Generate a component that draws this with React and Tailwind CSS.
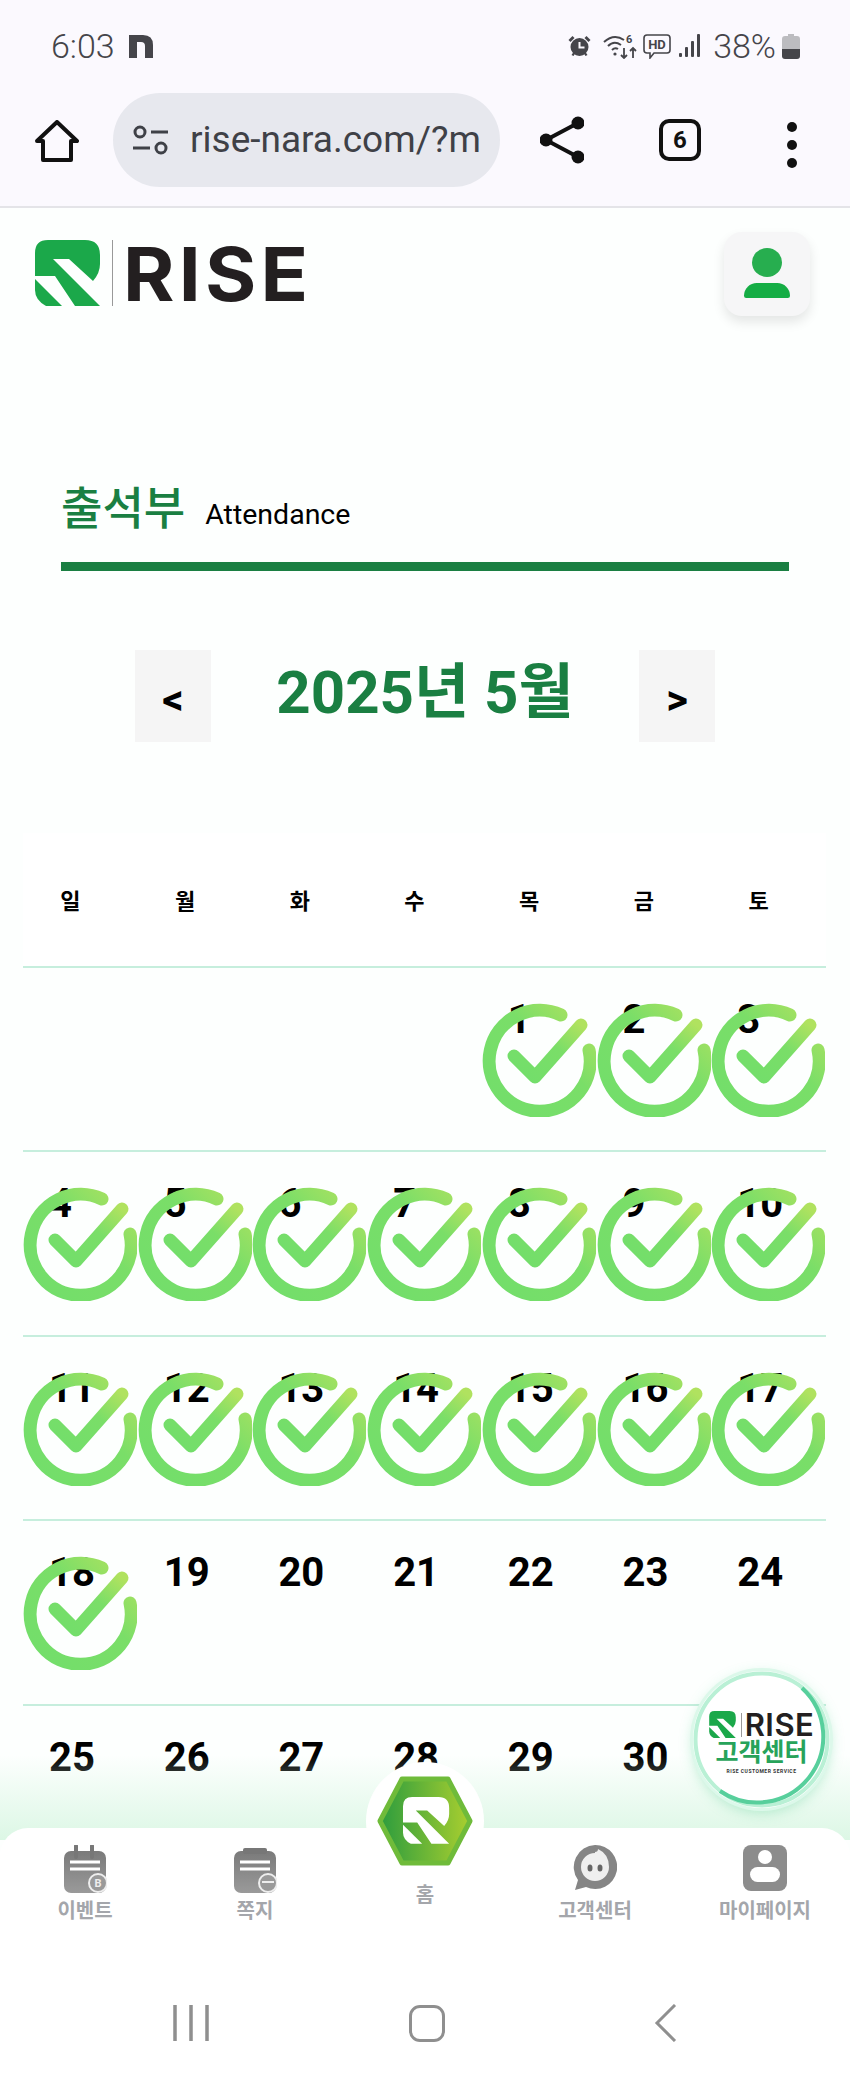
import React from 'react';

const WEEKDAYS = ['일', '월', '화', '수', '목', '금', '토'];
const WEEKS = [
    [null, null, null, null, 1, 2, 3],
    [4, 5, 6, 7, 8, 9, 10],
    [11, 12, 13, 14, 15, 16, 17],
    [18, 19, 20, 21, 22, 23, 24],
    [25, 26, 27, 28, 29, 30, 31],
];
const LAST_CHECKED = 18;
const MARK_TOP = 'M13 0H50Q65 0 65 15V24Q65 33 58 41L34 19H18L65 66H40L20 36H0V13Q0 0 13 0Z';
const MARK_BOTTOM = 'M0 39L27 66H11Q0 60 0 50Z';

const RiseMark = ({ className }) => (
    <svg viewBox="0 0 65 66" className={className}>
        <path fill="#1ba84a" d={MARK_TOP} />
        <path fill="#1ba84a" d={MARK_BOTTOM} />
    </svg>
);

const CheckStamp = ({ id }) => (
    <svg viewBox="0 0 114 114" className="absolute left-0 top-[35px] w-[114px] h-[114px]">
        <defs>
            <linearGradient id={id} x1="0" y1="1" x2="1" y2="0">
                <stop offset="0" stopColor="#72de6b" />
                <stop offset="0.6" stopColor="#7ade68" />
                <stop offset="1" stopColor="#b0e25f" />
            </linearGradient>
        </defs>
        <g fill="none" stroke={`url(#${id})`} strokeWidth="13" strokeLinecap="round" strokeLinejoin="round">
            <path d="M79 12A50.5 50.5 0 1 0 107 47" />
            <path d="M32 53L53 74L99 22" />
        </g>
    </svg>
);

const StatusIcons = () => (
    <div className="flex items-center text-[#45454a]">
        <svg viewBox="0 0 24 22" className="w-[25px] h-[22px]" fill="currentColor">
            <circle cx="12" cy="12" r="9" />
            <path d="M1 5L5 1L7 3L3 7ZM23 5L19 1L17 3L21 7ZM4 20L6 17L8 18L6 21ZM20 20L18 17L16 18L18 21Z" />
            <path d="M12 7V12.5H17" fill="none" stroke="#fbf9fe" strokeWidth="2" />
        </svg>
        <svg viewBox="0 0 34 26" className="w-[34px] h-[26px] ml-[11px]" fill="none" stroke="currentColor" strokeWidth="2">
            <path d="M1 9Q11 0 21 7M5 13Q11 7 18 12M9 17Q12 14 15 16" />
            <circle cx="12" cy="21" r="1.6" fill="currentColor" stroke="none" />
            <path d="M21 15V25M18 22L21 25L24 22M30 25V15M27 18L30 15L33 18" strokeWidth="1.8" />
            <text x="23" y="10" fontSize="11" fontWeight="700" fill="currentColor" stroke="none">6</text>
        </svg>
        <svg viewBox="0 0 28 25" className="w-[28px] h-[25px] ml-[6px]" fill="none" stroke="currentColor" strokeWidth="1.6">
            <path d="M4 1H24Q27 1 27 4V16Q27 19 24 19H11L7 24V19H4Q1 19 1 16V4Q1 1 4 1Z" />
            <text x="14" y="15" textAnchor="middle" fontSize="13" fontWeight="700" fill="currentColor" stroke="none">HD</text>
        </svg>
        <svg viewBox="0 0 22 24" className="w-[22px] h-[24px] ml-[8px]" fill="currentColor">
            <rect x="0" y="19" width="3" height="4" rx="1" />
            <rect x="6" y="13" width="3" height="10" rx="1" />
            <rect x="12" y="7" width="3" height="16" rx="1" />
            <rect x="18" y="0" width="3" height="23" rx="1" />
        </svg>
        <span className="ml-[12px] text-[34px] font-light leading-none">38%</span>
        <svg viewBox="0 0 18 25" className="w-[18px] h-[25px] ml-[6px]">
            <path fill="#bcbcc0" d="M6 0H12V2H15Q18 2 18 5V15H0V5Q0 2 3 2H6Z" />
            <path fill="#45454a" d="M0 15H18V22Q18 25 15 25H3Q0 25 0 22Z" />
        </svg>
    </div>
);

const BrowserBar = () => (
    <div className="bg-[#fbf9fe] border-b-2 border-[#e4e4e8]">
        <div className="h-[92px] flex items-center justify-between pl-[51px] pr-[50px]">
            <div className="flex items-center text-[#45454a]">
                <span className="text-[34px] font-light leading-none">6:03</span>
                <svg viewBox="0 0 24 23" className="w-[24px] h-[23px] ml-[14px]" fill="currentColor">
                    <path d="M0 0H14Q24 0 24 10V23H16V11Q16 7 12 7H8V23H0Z" />
                </svg>
            </div>
            <StatusIcons />
        </div>
        <div className="h-[114px] relative flex items-start pt-px">
            <svg viewBox="0 0 44 42" className="w-[44px] h-[42px] ml-[35px] mt-[27px]" fill="none" stroke="#111" strokeWidth="4" strokeLinejoin="round">
                <path d="M22 2L42 21H36V40H8V21H2Z" />
            </svg>
            <div className="ml-[34px] w-[387px] h-[94px] rounded-full bg-[#e7e8ee] flex items-center pl-[20px] pr-[20px]">
                <svg viewBox="0 0 36 30" className="w-[36px] h-[30px] shrink-0" fill="none" stroke="#3f4147" strokeWidth="3">
                    <circle cx="7" cy="7" r="5" />
                    <path d="M18 7H35M0 23H17" />
                    <circle cx="28" cy="23" r="5" />
                </svg>
                <div className="ml-[21px] overflow-hidden whitespace-nowrap text-[37px] leading-[44px] text-[#3f4147]">rise-nara.com/?m</div>
            </div>
            <svg viewBox="0 0 44 48" className="w-[44px] h-[48px] ml-[40px] mt-[23px]" fill="#111">
                <circle cx="38" cy="7" r="6.5" />
                <circle cx="6" cy="24" r="6.5" />
                <circle cx="38" cy="41" r="6.5" />
                <path d="M38 7L6 24L38 41" fill="none" stroke="#111" strokeWidth="4" />
            </svg>
            <div className="ml-[75px] mt-[26px] w-[42px] h-[42px] rounded-[10px] border-[4px] border-[#111] flex items-center justify-center text-[24px] font-bold leading-none text-[#111]">6</div>
            <div className="ml-[86px] mt-[29px] flex flex-col gap-[8px]">
                <span className="w-[10px] h-[10px] rounded-full bg-[#111]"></span>
                <span className="w-[10px] h-[10px] rounded-full bg-[#111]"></span>
                <span className="w-[10px] h-[10px] rounded-full bg-[#111]"></span>
            </div>
        </div>
    </div>
);

const SiteHeader = () => (
    <div className="h-[130px] flex items-start justify-between pl-[35px] pr-[40px] pt-[24px]">
        <div className="flex items-center mt-[7px]">
            <RiseMark className="w-[65px] h-[66px]" />
            <div className="w-px h-[66px] bg-[#999] ml-[12px]"></div>
            <span className="ml-[10px] pt-[2px] origin-left scale-x-[1.06] font-['Inter',sans-serif] font-bold text-[74px] leading-[66px] tracking-[4px] text-[#231f20]">RISE</span>
        </div>
        <div className="w-[86px] h-[84px] rounded-[18px] bg-[#f6f6f7] shadow-[0_6px_12px_rgba(0,0,0,0.1)] flex flex-col items-center pt-[16px]">
            <div className="w-[30px] h-[29px] rounded-[50%] bg-[#27ae4f]"></div>
            <div className="w-[46px] h-[15px] mt-[6px] rounded-t-[23px] rounded-b-[4px] bg-[#15ad45]"></div>
        </div>
    </div>
);

const MonthNav = () => (
    <div className="mt-[79px] flex items-center justify-between pl-[135px] pr-[135px]">
        <button className="w-[76px] h-[92px] bg-[#f5f5f5] text-[42px] font-bold leading-none text-black pt-[8px]">&lt;</button>
        <div className="text-[60px] font-bold leading-none text-[#1a7f42] pb-[6px]">2025년 5월</div>
        <button className="w-[76px] h-[92px] bg-[#f5f5f5] text-[42px] font-bold leading-none text-black pt-[8px]">&gt;</button>
    </div>
);

const Calendar = () => (
    <div className="mx-[23px] mt-[91px] w-[803px]">
        <div className="grid grid-cols-7 h-[133px] bg-white">
            {WEEKDAYS.map((day) => (
                <div key={day} className="flex items-center justify-center pr-[20px] pt-[3px] text-[22px] font-bold text-black">{day}</div>
            ))}
        </div>
        {WEEKS.map((week, i) => (
            <div key={i} className="grid grid-cols-7 h-[184.4px] border-t-2 border-[#c6eedd]">
                {week.map((date, j) => (
                    <div key={j} className="relative pl-[26px] pt-[28px] text-[40px] font-bold leading-[48px] text-black">
                        {date}
                        {date && date <= LAST_CHECKED && <CheckStamp id={`stamp-${date}`} />}
                    </div>
                ))}
            </div>
        ))}
    </div>
);

const TabIcon = ({ type }) => {
    if (type === 'event' || type === 'note') {
        return (
            <svg viewBox="0 0 44 48" className="w-[44px] h-[48px]">
                <defs>
                    <linearGradient id={`tab-${type}`} x1="0" y1="0" x2="0" y2="1">
                        <stop offset="0" stopColor="#7a7a7a" />
                        <stop offset="1" stopColor="#9a9a9a" />
                    </linearGradient>
                </defs>
                <rect x="1" y="6" width="42" height="42" rx="7" fill={`url(#tab-${type})`} />
                {type === 'event'
                    ? <path d="M13 1V12M29 1V12" stroke="#777" strokeWidth="4" strokeLinecap="round" />
                    : <rect x="10" y="3" width="24" height="6" rx="2" fill="#777" />}
                <path d="M7 17H37M7 24H37" stroke="#fff" strokeWidth="3" />
                <circle cx="35" cy="38" r="9" fill="#9a9a9a" stroke="#eee" strokeWidth="2" />
                {type === 'note'
                    ? <path d="M29 37H41" stroke="#eee" strokeWidth="2" />
                    : <text x="35" y="42" textAnchor="middle" fontSize="11" fontWeight="700" fill="#eee">B</text>}
            </svg>
        );
    }
    if (type === 'help') {
        return (
            <svg viewBox="0 0 44 46" className="w-[44px] h-[46px]">
                <path fill="#858585" d="M22 0A22 22 0 1 1 13 42L2 45L5 35A22 22 0 0 1 22 0Z" />
                <path fill="#efefef" d="M22 7Q25 7 25 4Q36 9 36 22A14 14 0 1 1 22 8Z" />
                <ellipse cx="17" cy="23" rx="2.5" ry="3.5" fill="#666" />
                <ellipse cx="27" cy="23" rx="2.5" ry="3.5" fill="#666" />
            </svg>
        );
    }
    return (
        <svg viewBox="0 0 44 46" className="w-[44px] h-[46px]">
            <rect width="44" height="46" rx="8" fill="#8c8c8c" />
            <circle cx="22" cy="12" r="7" fill="#fff" />
            <rect x="7" y="22" width="30" height="15" rx="7.5" fill="#fff" />
        </svg>
    );
};

const HomeHex = () => (
    <svg viewBox="0 0 96 92" className="w-[96px] h-[92px]">
        <defs>
            <linearGradient id="hex-fill" x1="0" y1="0" x2="1" y2="0">
                <stop offset="0" stopColor="#2c9c3e" />
                <stop offset="1" stopColor="#aacf2f" />
            </linearGradient>
        </defs>
        <path fill="url(#hex-fill)" stroke="#6fbb3a" strokeWidth="5" strokeLinejoin="round" d="M25 4H71L93 46L71 88H25L3 46Z" />
        <g transform="translate(26 22) scale(0.71)" fill="#fff">
            <path d={MARK_TOP} />
            <path d={MARK_BOTTOM} />
        </g>
    </svg>
);

const BottomBar = () => (
    <div className="absolute left-0 right-0 bottom-0 h-[250px] bg-white rounded-t-[28px] grid grid-cols-5 pt-[17px] text-[20px] font-bold leading-none text-[#a4a6ab]">
        <div className="flex flex-col items-center h-[76px] justify-between"><TabIcon type="event" /><span>이벤트</span></div>
        <div className="flex flex-col items-center h-[76px] justify-between"><TabIcon type="note" /><span>쪽지</span></div>
        <div className="flex flex-col items-center relative">
            <div className="absolute top-[-83px] w-[118px] h-[118px] rounded-full bg-white flex items-center justify-center">
                <HomeHex />
            </div>
            <span className="mt-[40px]">홈</span>
        </div>
        <div className="flex flex-col items-center h-[76px] justify-between"><TabIcon type="help" /><span>고객센터</span></div>
        <div className="flex flex-col items-center h-[76px] justify-between"><TabIcon type="my" /><span>마이페이지</span></div>
    </div>
);

const SystemNav = () => (
    <div className="absolute left-0 right-0 bottom-[36px] h-[38px] flex items-center pl-[173px]">
        <svg viewBox="0 0 36 38" className="w-[36px] h-[38px]" stroke="#8f8f8f" strokeWidth="3.5">
            <path d="M2 1V37M18 1V37M34 1V37" />
        </svg>
        <div className="ml-[200px] w-[36px] h-[37px] rounded-[11px] border-[3px] border-[#8f8f8f]"></div>
        <svg viewBox="0 0 24 38" className="w-[24px] h-[38px] ml-[209px]" fill="none" stroke="#8f8f8f" strokeWidth="3">
            <path d="M21 1L3 19L21 37" />
        </svg>
    </div>
);

const SupportBadge = () => (
    <div className="absolute left-[693px] top-[1671px] w-[137px] h-[137px] rounded-full bg-white shadow-[0_0_0_3px_#dcf8ea,0_4px_14px_rgba(60,200,130,0.35)] flex flex-col items-center pt-[40px]">
        <svg viewBox="0 0 137 137" className="absolute inset-0 w-[137px] h-[137px]" fill="none">
            <circle cx="68.5" cy="68.5" r="66" stroke="#b9f0d5" strokeWidth="4" />
            <path d="M109 17A66 66 0 0 1 27 120" stroke="#57cf9c" strokeWidth="4" />
        </svg>
        <div className="flex items-center">
            <RiseMark className="w-[27px] h-[27px]" />
            <div className="w-px h-[24px] bg-[#999] ml-[5px]"></div>
            <span className="ml-[3px] font-['Inter',sans-serif] font-semibold text-[31px] leading-[26px] tracking-[0.5px] text-[#231f20]">RISE</span>
        </div>
        <div className="mt-[2px] text-[25px] font-bold leading-[26px] text-[#27a35a]">고객센터</div>
        <div className="mt-[2px] text-[5px] font-bold leading-[6px] tracking-[0.5px] text-[#333]">RISE CUSTOMER SERVICE</div>
    </div>
);

const App = () => {
    return (
        <div className="relative w-[850px] h-[2078px] overflow-hidden bg-[#fdfffe] font-['Roboto','Noto_Sans_CJK_KR',sans-serif]">
            <BrowserBar />
            <SiteHeader />
            <div className="mx-[61px] mt-[144px] pb-[24px] border-b-[9px] border-[#1a7f42] flex items-end">
                <h2 className="text-[45px] font-medium leading-[56px] text-[#1a7f42]">출석부</h2>
                <span className="ml-[20px] mb-[3px] text-[28.5px] leading-[40px] text-black">Attendance</span>
            </div>
            <MonthNav />
            <Calendar />
            <div className="absolute left-0 right-0 top-[1755px] h-[85px] bg-gradient-to-b from-transparent to-[#dcf7e5]"></div>
            <BottomBar />
            <SystemNav />
            <SupportBadge />
        </div>
    );
};

export default App;
